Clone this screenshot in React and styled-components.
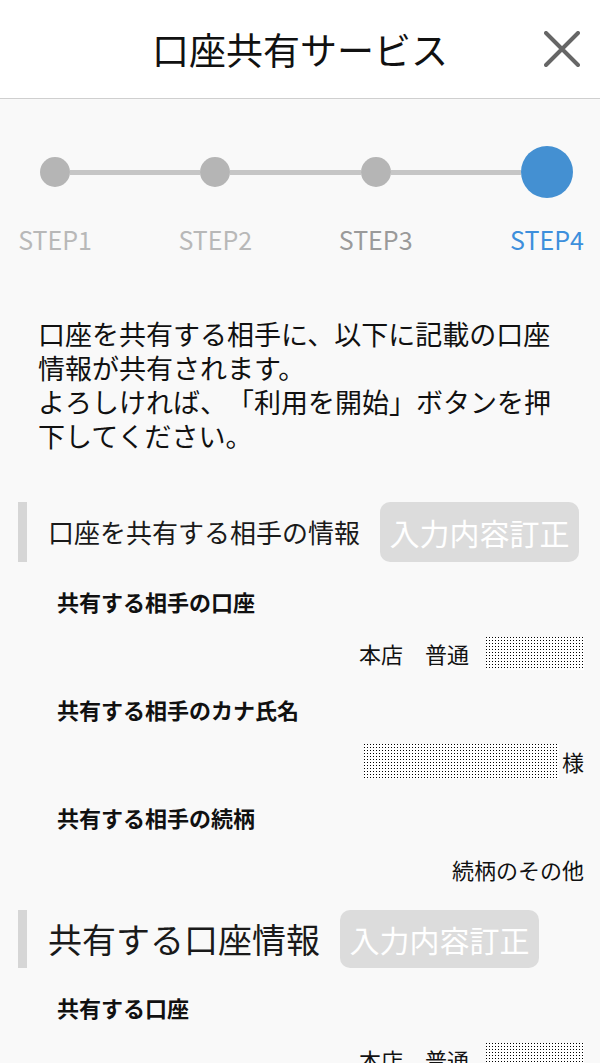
import styled, { createGlobalStyle } from 'styled-components'

const GlobalStyle = createGlobalStyle`
  html, body {
    margin: 0;
    padding: 0;
    background: #f9f9f9;
  }
  body {
    font-family: "Noto Sans CJK JP", "Noto Sans", sans-serif;
    color: #111;
    text-spacing-trim: space-all;
  }
`

const Page = styled.div`
  width: 600px;
  min-height: 1063px;
  background: #f9f9f9;
  overflow: hidden;
`

const Header = styled.header`
  display: grid;
  grid-template-columns: 1fr auto 1fr;
  align-items: center;
  height: 98px;
  background: #fff;
  border-bottom: 1px solid #cfcfcf;
`

const Title = styled.h1`
  grid-column: 2;
  margin: 0;
  font-size: 37px;
  font-weight: 400;
  line-height: 1;
  color: #111;
`

const CloseButton = styled.button`
  justify-self: end;
  margin-right: 18px;
  width: 40px;
  height: 40px;
  padding: 0;
  border: 0;
  background: none;
  display: flex;
  align-items: center;
  justify-content: center;
`

const Stepper = styled.div`
  display: flex;
  padding: 47px 27px 0 40px;
`

const Step = styled.div`
  display: flex;
  flex-direction: column;
  align-items: center;
  width: ${(p) => (p.$active ? 52 : 30)}px;
  flex: none;
`

const DotBox = styled.div`
  height: 52px;
  display: flex;
  align-items: center;
`

const Dot = styled.div`
  width: ${(p) => (p.$active ? 52 : 30)}px;
  height: ${(p) => (p.$active ? 52 : 30)}px;
  border-radius: 50%;
  background: ${(p) => (p.$active ? '#4490d2' : '#b5b5b5')};
`

const StepLabel = styled.div`
  margin-top: 26px;
  font-size: 25px;
  line-height: 30px;
  white-space: nowrap;
  color: ${(p) => p.$color};
`

const Segment = styled.div`
  flex: 1;
  height: 5px;
  margin-top: 24px;
  background: #c6c6c6;
`

const Notice = styled.p`
  margin: 63px 0 0;
  padding: 0 38px;
  width: 524px;
  font-size: 27px;
  line-height: 34px;
  color: #111;
`

const SectionHead = styled.div`
  display: flex;
  align-items: center;
  gap: 20px;
  margin: ${(p) => p.$top}px 0 0 18px;
  height: ${(p) => p.$height}px;
  padding-left: 21px;
  border-left: 9px solid #d6d6d6;
`

const SectionTitle = styled.h2`
  margin: 0;
  font-size: ${(p) => p.$size}px;
  font-weight: 400;
  line-height: 1.2;
  color: #1a1a1a;
  white-space: nowrap;
`

const EditButton = styled.button`
  flex: none;
  width: 199px;
  height: 100%;
  border: 0;
  border-radius: 10px;
  background: #dcdcdc;
  color: #fff;
  font-family: inherit;
  font-size: 30px;
  padding: 0;
`

const Field = styled.div`
  padding-top: 24px;
`

const FieldLabel = styled.div`
  padding-left: 57px;
  font-size: 22px;
  font-weight: 700;
  line-height: 30px;
  color: #111;
`

const ValueRow = styled.div`
  display: flex;
  justify-content: flex-end;
  align-items: center;
  gap: ${(p) => p.$gap || 0}px;
  height: 34px;
  margin-top: 20px;
  padding-right: 16px;
  font-size: 22px;
  line-height: 34px;
  color: #111;
  white-space: nowrap;
`

// masked value: sparse black dot screen on white
const Masked = styled.span`
  display: inline-block;
  width: ${(p) => p.$w}px;
  height: ${(p) => p.$h}px;
  background-color: #000;
  background-image:
    linear-gradient(to right, transparent 1px, #fff 1px),
    linear-gradient(to bottom, transparent 1px, #fff 1px);
  background-size: 3px 3px;
`

const steps = [
  { label: 'STEP1', color: '#b8b8b8' },
  { label: 'STEP2', color: '#b8b8b8' },
  { label: 'STEP3', color: '#9a9a9a' },
  { label: 'STEP4', color: '#3d8fdc', active: true },
]

export default function App() {
  return (
    <Page>
      <GlobalStyle />
      <Header>
        <Title>口座共有サービス</Title>
        <CloseButton aria-label="閉じる">
          <svg width="36" height="36" viewBox="0 0 36 36">
            <path d="M2 2 L34 34 M34 2 L2 34" stroke="#666" strokeWidth="4" strokeLinecap="round" />
          </svg>
        </CloseButton>
      </Header>

      <Stepper>
        {steps.map((s, i) => [
          i > 0 && <Segment key={'seg' + i} />,
          <Step key={s.label} $active={s.active}>
            <DotBox>
              <Dot $active={s.active} />
            </DotBox>
            <StepLabel $color={s.color}>{s.label}</StepLabel>
          </Step>,
        ])}
      </Stepper>

      <Notice>
        口座を共有する相手に、以下に記載の口座情報が共有されます。
        <br />
        よろしければ、「利用を開始」ボタンを押下してください。
      </Notice>

      <SectionHead $top={49} $height={60}>
        <SectionTitle $size={26}>口座を共有する相手の情報</SectionTitle>
        <EditButton>入力内容訂正</EditButton>
      </SectionHead>

      <Field>
        <FieldLabel>共有する相手の口座</FieldLabel>
        <ValueRow $gap={17}>
          <span>本店　普通</span>
          <Masked $w={98} $h={33} />
        </ValueRow>
      </Field>

      <Field>
        <FieldLabel>共有する相手のカナ氏名</FieldLabel>
        <ValueRow $gap={3}>
          <Masked $w={195} $h={35} />
          <span>様</span>
        </ValueRow>
      </Field>

      <Field>
        <FieldLabel>共有する相手の続柄</FieldLabel>
        <ValueRow>
          <span>続柄のその他</span>
        </ValueRow>
      </Field>

      <SectionHead $top={24} $height={58}>
        <SectionTitle $size={34}>共有する口座情報</SectionTitle>
        <EditButton>入力内容訂正</EditButton>
      </SectionHead>

      <Field>
        <FieldLabel>共有する口座</FieldLabel>
        <ValueRow $gap={17}>
          <span>本店　普通</span>
          <Masked $w={98} $h={33} />
        </ValueRow>
      </Field>
    </Page>
  )
}
